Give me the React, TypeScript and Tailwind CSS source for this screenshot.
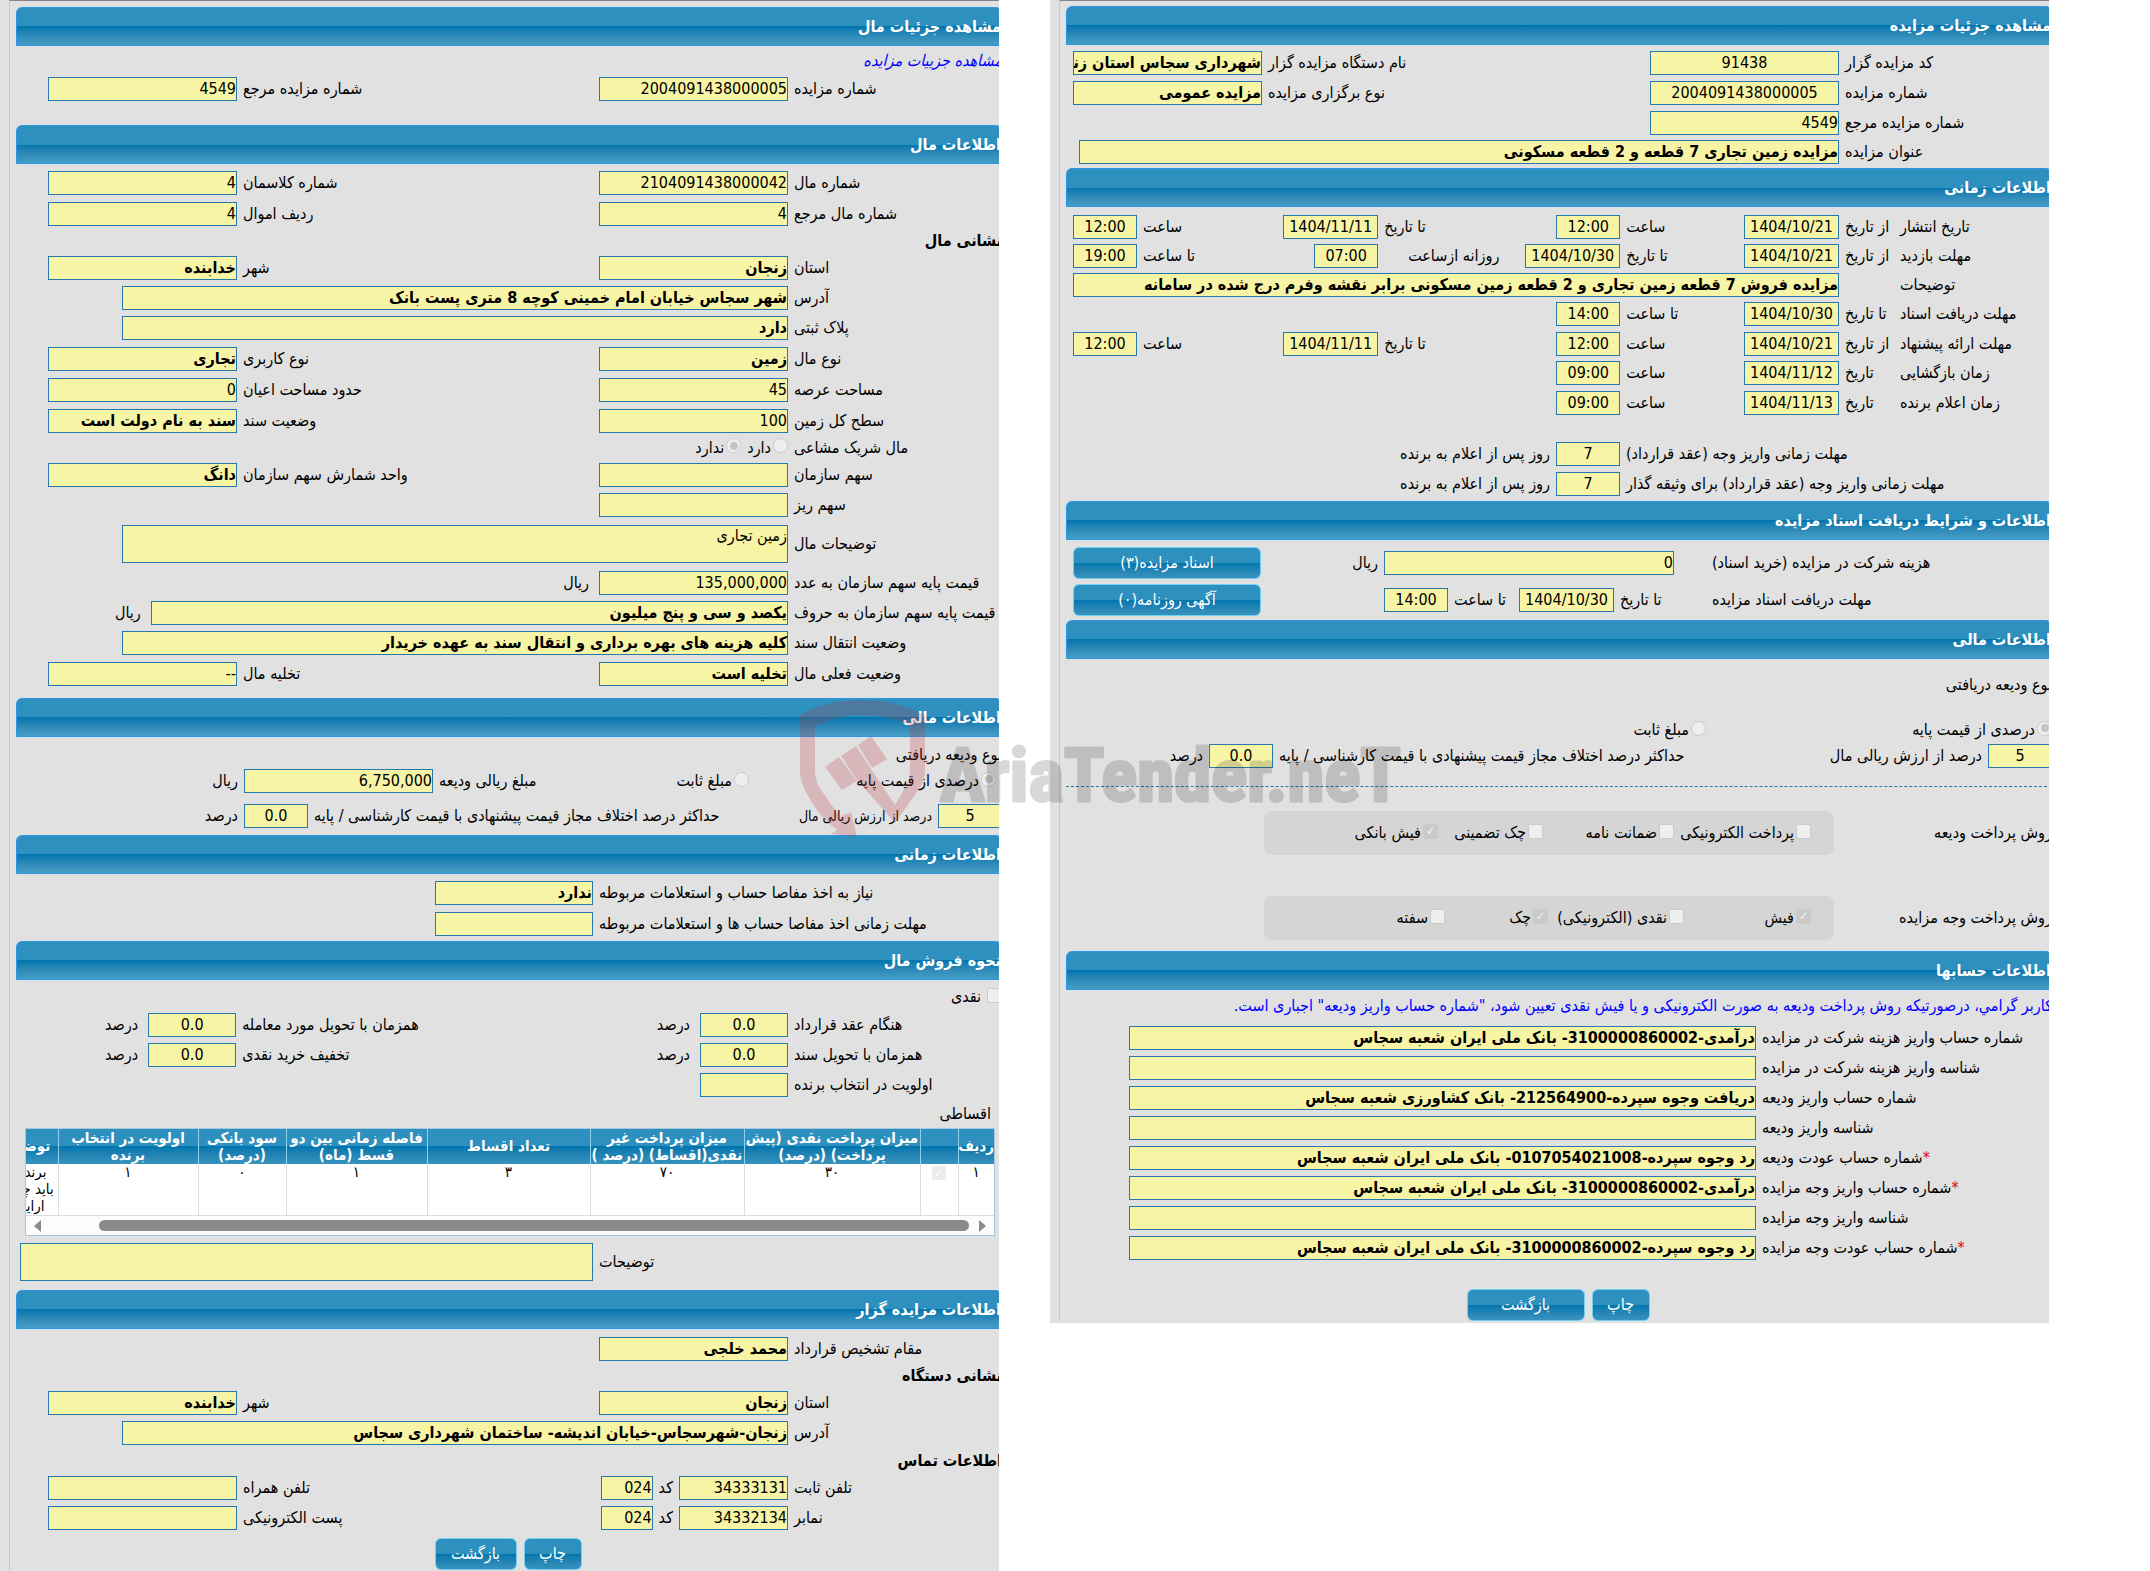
import { useId, type ReactNode } from "react";
import clsx from "clsx";

interface FieldProps {
    label: ReactNode;
    value?: string;
    labelClass?: string;
    inputClass?: string;
    required?: boolean;
}

interface ChoiceProps {
    label: string;
    type: "radio" | "checkbox";
    checked?: boolean;
    className?: string;
}

const WIDE = "w-[189px]";
const DATE = "w-[95px] text-center";
const TIME = "w-16 text-center";
const PERCENT = "w-[88px] text-center";

// Persian values are set in bold, plain numbers are not
const hasLetters = (value: string) => /[آ-ی]/.test(value);

function Field({ label, value = "", labelClass, inputClass, required }: FieldProps) {
    const id = useId();
    return (
        <>
            <label htmlFor={id} className={clsx("shrink-0 whitespace-nowrap text-end", labelClass)}>
                {required && <span className="text-red-600">*</span>}
                {label}
            </label>
            <input
                id={id}
                type="text"
                readOnly
                value={value}
                className={clsx(
                    "h-6 min-w-0 border border-[#2679ab] bg-[#f7f4a5] text-black outline-none",
                    hasLetters(value) && "font-bold",
                    inputClass
                )}
            />
        </>
    );
}

function Area({ label, value = "", labelClass, inputClass }: FieldProps) {
    const id = useId();
    return (
        <>
            <label htmlFor={id} className={clsx("shrink-0 whitespace-nowrap text-end", labelClass)}>
                {label}
            </label>
            <textarea
                id={id}
                readOnly
                value={value}
                className={clsx(
                    "h-[38px] min-w-0 resize-none overflow-hidden border border-[#2679ab] bg-[#f7f4a5] leading-5 text-black outline-none",
                    inputClass
                )}
            />
        </>
    );
}

function Choice({ label, type, checked = false, className }: ChoiceProps) {
    return (
        <label className={clsx("flex items-center gap-0.5 whitespace-nowrap", className)}>
            <input
                type={type}
                disabled
                checked={checked}
                readOnly
                className={clsx(
                    "mb-1 flex size-[15px] shrink-0 appearance-none items-center justify-center border border-[#cbcbcb] bg-[#efefef]",
                    type === "radio"
                        ? "rounded-full checked:before:size-2 checked:before:rounded-full checked:before:bg-[#c4c4c4]"
                        : "rounded-xs checked:bg-[#cacaca] checked:before:text-xs checked:before:text-[#f4f4f4] checked:before:content-['✓']"
                )}
            />
            {label}
        </label>
    );
}

function Header({ children }: { children: ReactNode }) {
    return (
        <h2 className="flex h-[39px] items-center rounded-t-md border border-[#2b95e6] bg-linear-to-b from-[#2e90be] from-50% via-[#0076ad] via-50% to-[#489ec4] font-bold text-white">
            {children}
        </h2>
    );
}

function Row({ children, className }: { children: ReactNode; className?: string }) {
    return <div className={clsx("flex items-center gap-1.5", className)}>{children}</div>;
}

function Button({ children, className }: { children: ReactNode; className?: string }) {
    return (
        <button
            type="button"
            className={clsx(
                "h-8 rounded-md border border-[#6fd0f3] bg-linear-to-b from-[#2e90be] from-50% via-[#0076ad] via-50% to-[#3793bd] text-white",
                className
            )}
        >
            {children}
        </button>
    );
}

function Panel({ children, className }: { children: ReactNode; className?: string }) {
    return (
        <main dir="rtl" className={clsx("min-w-0 flex-1 overflow-hidden bg-[#e1e1e1] pl-[9px]", className)}>
            <div className="-mr-[3px] border-l border-t border-l-[#c8c8c8] border-t-[#858285] pl-1.5">
                {children}
            </div>
        </main>
    );
}

const columns = [
    { title: "ردیف", value: "۱", width: "w-9" },
    { title: "", value: "", width: "w-[38px]" },
    { title: "میزان پرداخت نقدی (پیش پرداخت) (درصد)", value: "۳۰", width: "w-44" },
    { title: "میزان پرداخت غیر نقدی(اقساط) (درصد )", value: "۷۰", width: "w-[154px]" },
    { title: "تعداد اقساط", value: "۳", width: "w-[163px]" },
    { title: "فاصله زمانی بین دو قسط (ماه)", value: "۱", width: "w-[141px]" },
    { title: "سود بانکی (درصد)", value: "۰", width: "w-[88px]" },
    { title: "اولویت در انتخاب برنده", value: "۱", width: "w-[140px]" },
    { title: "توضیحات", value: "برنده\nباید چک\nارایه", width: "w-[76px]" },
];

function Installments() {
    return (
        <div className="mr-[7px] ml-[9px] border border-[#a5c8dc] bg-white">
            <div className="overflow-hidden">
                <table className="w-[1012px] table-fixed border-collapse text-[15px] leading-[17px]">
                    <thead>
                        <tr className="h-[35px] bg-linear-to-b from-[#2e90be] from-50% via-[#0076ad] via-50% to-[#3793bd] text-white">
                            {columns.map((column, index) => (
                                <th key={index} className={clsx("border-l border-[#8fd2ef] p-0 font-bold", column.width)}>
                                    {column.title}
                                </th>
                            ))}
                        </tr>
                    </thead>
                    <tbody>
                        <tr className="h-[51px] text-center align-top">
                            {columns.map((column, index) => (
                                <td
                                    key={index}
                                    className={clsx(
                                        "whitespace-pre-line border-b border-l border-[#dcdcdc] p-0",
                                        index === columns.length - 1 && "pl-6"
                                    )}
                                >
                                    {index === 1 ? (
                                        <input
                                            type="checkbox"
                                            aria-label="انتخاب"
                                            disabled
                                            checked
                                            readOnly
                                            className="inline-flex size-[14px] appearance-none items-center justify-center rounded-xs bg-[#ececec] checked:before:text-xs checked:before:text-white checked:before:content-['✓']"
                                        />
                                    ) : (
                                        column.value
                                    )}
                                </td>
                            ))}
                        </tr>
                    </tbody>
                </table>
            </div>
            <div className="flex h-[19px] items-center gap-2.5 bg-[#fcfcfc] px-2">
                <svg viewBox="0 0 7 12" className="h-3 w-[7px]" fill="#8a8a8a">
                    <path d="M0 0L7 6L0 12Z" />
                </svg>
                <div className="ml-12 h-[11px] flex-1 rounded-full bg-[#8a8a8a]" />
                <svg viewBox="0 0 7 12" className="h-3 w-[7px]" fill="#8a8a8a">
                    <path d="M7 0L0 6L7 12Z" />
                </svg>
            </div>
        </div>
    );
}

function Watermark() {
    return (
        <svg
            viewBox="0 0 610 145"
            className="pointer-events-none absolute top-[697px] left-[797px] h-[145px] w-[610px]"
        >
            <g fill="#b83238" opacity="0.23">
                <path d="M3 18Q30 3 65 3Q98 3 128 18V73Q128 84 122 92L98 126L60 83L44 59L59 49L74 72L98 108L111 86Q113 80 113 73V28Q90 18 65 18Q38 18 18 30V73Q18 82 22 90L43 120L54 115L60 140L34 137L40 133Q20 118 9 95Q3 84 3 73Z" />
                <path d="M28 70L42 60L60 84L45 93Z" />
                <path d="M61 48L74 39L90 62L75 71Z" />
            </g>
            <g opacity="0.15" stroke="#000000" strokeWidth="3" strokeLinejoin="round">
                <text
                    x="143"
                    y="104"
                    className="font-['Roboto_Condensed','Noto_Sans_Condensed','Open_Sans_Condensed','Liberation_Sans_Narrow','Roboto',sans-serif] text-[75px] font-bold"
                >
                    AriaTender.neT
                </text>
            </g>
        </svg>
    );
}

function PropertyPanel() {
    const half = { labelClass: "w-[208px]", inputClass: WIDE };
    const other = { labelClass: "flex-1", inputClass: WIDE };
    return (
        <Panel className="pb-1">
            <div className="pt-1.5">
                <Header>مشاهده جزئیات مال</Header>
                <div className="flex h-[27px] items-end">
                    <a href="#auction" className="text-[#0000ff] italic">مشاهده جزییات مزایده</a>
                </div>
                <Row className="h-[31px] pl-8">
                    <Field label="شماره مزایده" value="2004091438000005" {...half} />
                    <Field label="شماره مزایده مرجع" value="4549" {...other} />
                </Row>
            </div>

            <div className="pt-[21px]">
                <Header>اطلاعات مال</Header>
                <Row className="mt-[3px] h-[31px] pl-8">
                    <Field label="شماره مال" value="2104091438000042" {...half} />
                    <Field label="شماره کلاسمان" value="4" {...other} />
                </Row>
                <Row className="h-[31px] pl-8">
                    <Field label="شماره مال مرجع" value="4" {...half} />
                    <Field label="ردیف اموال" value="4" {...other} />
                </Row>
                <h3 className="flex h-[23px] items-center font-bold">نشانی مال</h3>
                <Row className="h-[31px] pl-8">
                    <Field label="استان" value="زنجان" {...half} />
                    <Field label="شهر" value="خدابنده" {...other} />
                </Row>
                <Row className="h-[30px] pl-[106px]">
                    <Field label="آدرس" value="شهر سجاس خیابان امام خمینی کوچه 8 متری پست بانک" labelClass="w-[208px]" inputClass="flex-1" />
                </Row>
                <Row className="h-[30px] pl-[106px]">
                    <Field label="پلاک ثبتی" value="دارد" labelClass="w-[208px]" inputClass="flex-1" />
                </Row>
                <Row className="h-[31px] pl-8">
                    <Field label="نوع مال" value="زمین" {...half} />
                    <Field label="نوع کاربری" value="تجاری" {...other} />
                </Row>
                <Row className="h-[31px] pl-8">
                    <Field label="مساحت عرصه" value="45" {...half} />
                    <Field label="حدود مساحت اعیان" value="0" {...other} />
                </Row>
                <Row className="h-[31px] pl-8">
                    <Field label="سطح کل زمین" value="100" {...half} />
                    <Field label="وضعیت سند" value="سند به نام دولت است" {...other} />
                </Row>
                <Row className="h-[23px]">
                    <span className="w-[208px] text-end">مال شریک مشاعی</span>
                    <Choice type="radio" label="دارد" />
                    <Choice type="radio" label="ندارد" checked />
                </Row>
                <Row className="h-[31px] pl-8">
                    <Field label="سهم سازمان" {...half} />
                    <Field label="واحد شمارش سهم سازمان" value="دانگ" {...other} />
                </Row>
                <Row className="h-[30px]">
                    <Field label="سهم ریز" {...half} />
                </Row>
                <Row className="h-[47px] pl-[106px]">
                    <Area label="توضیحات مال" value="زمین تجاری" labelClass="w-[208px]" inputClass="flex-1" />
                </Row>
                <Row className="h-[31px]">
                    <Field label="قیمت پایه سهم سازمان به عدد" value="135,000,000" {...half} />
                    <span className="mr-1">ریال</span>
                </Row>
                <Row className="h-[30px] pl-[99px]">
                    <Field label="قیمت پایه سهم سازمان به حروف" value="یکصد و سی و پنج میلیون" labelClass="w-[208px]" inputClass="flex-1" />
                    <span className="mr-1">ریال</span>
                </Row>
                <Row className="h-[30px] pl-[106px]">
                    <Field label="وضعیت انتقال سند" value="کلیه هزینه های بهره برداری و انتقال سند به عهده خریدار" labelClass="w-[208px]" inputClass="flex-1" />
                </Row>
                <Row className="h-[31px] pl-8">
                    <Field label="وضعیت فعلی مال" value="تخلیه است" {...half} />
                    <Field label="تخلیه مال" value="--" {...other} />
                </Row>
            </div>

            <div className="pt-[9px]">
                <Header>اطلاعات مالی</Header>
                <div className="flex h-8 items-center pt-1">نوع ودیعه دریافتی</div>
                <Row className="h-6 pl-48">
                    <Choice type="radio" label="درصدی از قیمت پایه" checked className="mr-1.5 w-[241px]" />
                    <Choice type="radio" label="مبلغ ثابت" />
                    <Field label="مبلغ ریالی ودیعه" value="6,750,000" labelClass="flex-1" inputClass={WIDE} />
                    <span className="w-[30px]">ریال</span>
                </Row>
                <Row className="mt-1 h-[38px] pl-[186px]">
                    <Field label="" value="5" labelClass="hidden" inputClass="w-16 text-center" />
                    <span className="text-sm whitespace-nowrap">درصد از ارزش ریالی مال</span>
                    <Field label="حداکثر درصد اختلاف مجاز قیمت پیشنهادی با قیمت کارشناسی / پایه" value="0.0" labelClass="flex-1" inputClass={TIME} />
                    <span className="w-9">درصد</span>
                </Row>
            </div>

            <div>
                <Header>اطلاعات زمانی</Header>
                <Row className="mt-[3px] h-[31px]">
                    <Field label="نیاز به اخذ مفاصا حساب و استعلامات مربوطه" value="ندارد" labelClass="w-[403px]" inputClass="w-[158px]" />
                </Row>
                <Row className="h-[31px]">
                    <Field label="مهلت زمانی اخذ مفاصا حساب ها و استعلامات مربوطه" labelClass="w-[403px]" inputClass="w-[158px]" />
                </Row>
            </div>

            <div className="pt-0.5">
                <Header>نحوه فروش مال</Header>
                <Choice type="checkbox" label="نقدی" className="mt-[5px] h-6 gap-1.5" />
                <Row className="h-[31px] pl-[89px]">
                    <Field label="هنگام عقد قرارداد" value="0.0" labelClass="w-[208px]" inputClass={PERCENT} />
                    <span className="mr-1">درصد</span>
                    <Field label="همزمان با تحویل مورد معامله" value="0.0" labelClass="flex-1" inputClass={PERCENT} />
                    <span className="mr-1">درصد</span>
                </Row>
                <Row className="h-[30px] pl-[89px]">
                    <Field label="همزمان با تحویل سند" value="0.0" labelClass="w-[208px]" inputClass={PERCENT} />
                    <span className="mr-1">درصد</span>
                    <Field label="تخفیف خرید نقدی" value="0.0" labelClass="flex-1" inputClass={PERCENT} />
                    <span className="mr-1">درصد</span>
                </Row>
                <Row className="h-[30px]">
                    <Field label="اولویت در انتخاب برنده" labelClass="w-[208px]" inputClass={PERCENT} />
                </Row>
                <div className="flex h-7 items-center pr-[11px]">اقساطی</div>
                <Installments />
                <Row className="mt-[7px] pl-1">
                    <Area label="توضیحات" labelClass="w-[403px]" inputClass="flex-1" />
                </Row>
            </div>

            <div className="pt-[9px]">
                <Header>اطلاعات مزایده گزار</Header>
                <Row className="mt-1 h-[31px]">
                    <Field label="مقام تشخیص قرارداد" value="محمد خلجی" {...half} />
                </Row>
                <h3 className="flex h-[23px] items-center font-bold">نشانی دستگاه</h3>
                <Row className="h-[31px] pl-8">
                    <Field label="استان" value="زنجان" {...half} />
                    <Field label="شهر" value="خدابنده" {...other} />
                </Row>
                <Row className="h-[30px] pl-[106px]">
                    <Field label="آدرس" value="زنجان-شهرسجاس-خیابان اندیشه- ساختمان شهرداری سجاس" labelClass="w-[208px]" inputClass="flex-1" />
                </Row>
                <h3 className="flex h-[25px] items-center font-bold">اطلاعات تماس</h3>
                <Row className="h-[30px] pl-8">
                    <Field label="تلفن ثابت" value="34333131" labelClass="w-[208px]" inputClass="w-[109px]" />
                    <Field label="کد" value="024" inputClass="w-[52px]" />
                    <Field label="تلفن همراه" {...other} />
                </Row>
                <Row className="h-[30px] pl-8">
                    <Field label="نمابر" value="34332134" labelClass="w-[208px]" inputClass="w-[109px]" />
                    <Field label="کد" value="024" inputClass="w-[52px]" />
                    <Field label="پست الکترونیکی" {...other} />
                </Row>
                <div className="flex justify-center gap-[7px] pt-[5px] pr-0.5">
                    <Button className="w-[58px]">چاپ</Button>
                    <Button className="w-[82px]">بازگشت</Button>
                </div>
            </div>
        </Panel>
    );
}

const SCHEDULE =
    "grid h-[29px] grid-cols-[152px_49px_95px_1fr_96px_1.2fr_95px_1.2fr_64px] items-center gap-x-1.5 pl-[7px]";

const accounts = [
    { label: "شماره حساب واریز هزینه شرکت در مزایده", value: "درآمدی-3100000860002- بانک ملی ایران شعبه سجاس" },
    { label: "شناسه واریز هزینه شرکت در مزایده", value: "" },
    { label: "شماره حساب واریز ودیعه", value: "دریافت وجوه سپرده-212564900- بانک کشاورزی شعبه سجاس" },
    { label: "شناسه واریز ودیعه", value: "" },
    { label: "شماره حساب عودت ودیعه", value: "رد وجوه سپرده-0107054021008- بانک ملی ایران شعبه سجاس", required: true },
    { label: "شماره حساب واریز وجه مزایده", value: "درآمدی-3100000860002- بانک ملی ایران شعبه سجاس", required: true },
    { label: "شناسه واریز وجه مزایده", value: "" },
    { label: "شماره حساب عودت وجه مزایده", value: "رد وجوه سپرده-3100000860002- بانک ملی ایران شعبه سجاس", required: true },
];

function AuctionPanel() {
    const half = { labelClass: "w-[207px]", inputClass: WIDE };
    const other = { labelClass: "flex-1", inputClass: WIDE };
    return (
        <Panel className="pb-0.5">
            <div className="pt-[5px]">
                <Header>مشاهده جزئیات مزایده</Header>
                <Row className="mt-[3px] h-[30px] pl-[7px]">
                    <Field label="کد مزایده گزار" value="91438" labelClass="w-[207px]" inputClass="w-[189px] text-center" />
                    <Field label="نام دستگاه مزایده گزار" value="شهرداری سجاس استان زنجان" {...other} />
                </Row>
                <Row className="h-[30px] pl-[7px]">
                    <Field label="شماره مزایده" value="2004091438000005" labelClass="w-[207px]" inputClass="w-[189px] text-center" />
                    <Field label="نوع برگزاری مزایده" value="مزایده عمومی" {...other} />
                </Row>
                <Row className="h-[29px]">
                    <Field label="شماره مزایده مرجع" value="4549" {...half} />
                </Row>
                <Row className="h-[30px] pl-[13px]">
                    <Field label="عنوان مزایده" value="مزایده زمین تجاری 7 قطعه و 2 قطعه مسکونی" labelClass="w-[207px]" inputClass="flex-1" />
                </Row>
            </div>

            <div className="pt-px">
                <Header>اطلاعات زمانی</Header>
                <div className="pt-[5px]">
                    <div className={SCHEDULE}>
                        <span className="text-end">تاریخ انتشار</span>
                        <Field label="از تاریخ" value="1404/10/21" inputClass={DATE} />
                        <Field label="ساعت" value="12:00" inputClass={TIME} />
                        <Field label="تا تاریخ" value="1404/11/11" inputClass={DATE} />
                        <Field label="ساعت" value="12:00" inputClass={TIME} />
                    </div>
                    <div className={SCHEDULE}>
                        <span className="text-end">مهلت بازدید</span>
                        <Field label="از تاریخ" value="1404/10/21" inputClass={DATE} />
                        <Field label="تا تاریخ" value="1404/10/30" inputClass={DATE} />
                        <Field label="روزانه ازساعت" value="07:00" labelClass="pl-6" inputClass={TIME} />
                        <Field label="تا ساعت" value="19:00" inputClass={TIME} />
                    </div>
                    <div className={SCHEDULE}>
                        <Field
                            label="توضیحات"
                            value="مزایده فروش 7 قطعه زمین تجاری و 2 قطعه زمین مسکونی برابر نقشه وفرم درج شده در سامانه"
                            inputClass="col-start-3 col-end-10"
                        />
                    </div>
                    <div className={SCHEDULE}>
                        <span className="text-end">مهلت دریافت اسناد</span>
                        <Field label="تا تاریخ" value="1404/10/30" inputClass={DATE} />
                        <Field label="تا ساعت" value="14:00" inputClass={TIME} />
                    </div>
                    <div className={clsx(SCHEDULE, "mt-px")}>
                        <span className="text-end">مهلت ارائه پیشنهاد</span>
                        <Field label="از تاریخ" value="1404/10/21" inputClass={DATE} />
                        <Field label="ساعت" value="12:00" inputClass={TIME} />
                        <Field label="تا تاریخ" value="1404/11/11" inputClass={DATE} />
                        <Field label="ساعت" value="12:00" inputClass={TIME} />
                    </div>
                    <div className={SCHEDULE}>
                        <span className="text-end">زمان بازگشایی</span>
                        <Field label="تاریخ" value="1404/11/12" inputClass={DATE} />
                        <Field label="ساعت" value="09:00" inputClass={TIME} />
                    </div>
                    <div className={clsx(SCHEDULE, "mt-px")}>
                        <span className="text-end">زمان اعلام برنده</span>
                        <Field label="تاریخ" value="1404/11/13" inputClass={DATE} />
                        <Field label="ساعت" value="09:00" inputClass={TIME} />
                    </div>
                </div>
                <Row className="mt-[22px] h-[30px]">
                    <Field label="مهلت زمانی واریز وجه (عقد قرارداد)" value="7" labelClass="w-[426px]" inputClass={TIME} />
                    <span>روز پس از اعلام به برنده</span>
                </Row>
                <Row className="h-[30px]">
                    <Field label="مهلت زمانی واریز وجه (عقد قرارداد) برای وثیقه گذار" value="7" labelClass="w-[426px]" inputClass={TIME} />
                    <span>روز پس از اعلام به برنده</span>
                </Row>
            </div>

            <div className="pt-0.5">
                <Header>اطلاعات و شرایط دریافت اسناد مزایده</Header>
                <Row className="mt-1 h-[37px] pl-[7px]">
                    <Field label="هزینه شرکت در مزایده (خرید اسناد)" value="0" labelClass="w-[340px] ml-8" inputClass="w-[290px]" />
                    <span className="flex-1">ریال</span>
                    <Button className="w-[188px]">اسناد مزایده(۳)</Button>
                </Row>
                <Row className="h-[37px] pl-[7px]">
                    <span className="w-[340px] text-end">مهلت دریافت اسناد مزایده</span>
                    <Field label="تا تاریخ" value="1404/10/30" labelClass="w-[86px]" inputClass={DATE} />
                    <Field label="تا ساعت" value="14:00" labelClass="w-[59px]" inputClass={TIME} />
                    <span className="flex-1" />
                    <Button className="w-[188px]">آگهی روزنامه(۰)</Button>
                </Row>
            </div>

            <div className="pt-0.5">
                <Header>اطلاعات مالی</Header>
                <div className="mt-2.5 flex h-8 items-center">نوع ودیعه دریافتی</div>
                <Row className="mt-4 h-[26px]">
                    <Choice type="radio" label="درصدی از قیمت پایه" checked className="w-[340px]" />
                    <Choice type="radio" label="مبلغ ثابت" />
                </Row>
                <Row className="h-[26px] pl-[101px]">
                    <Field label="" value="5" labelClass="hidden" inputClass="w-16 text-center" />
                    <span className="whitespace-nowrap">درصد از ارزش ریالی مال</span>
                    <Field label="حداکثر درصد اختلاف مجاز قیمت پیشنهادی با قیمت کارشناسی / پایه" value="0.0" labelClass="flex-1" inputClass={TIME} />
                    <span className="w-9">درصد</span>
                </Row>
                <hr className="mt-[17px] border-t border-dashed border-[#2679ab]" />
                <div className="mt-6 flex items-center">
                    <span className="w-[218px]">روش پرداخت ودیعه</span>
                    <div className="grid h-11 w-[570px] grid-cols-[137px_131px_105px_1fr] items-center rounded-lg bg-[#d5d5d5] pr-[23px]">
                        <Choice type="checkbox" label="پرداخت الکترونیکی" />
                        <Choice type="checkbox" label="ضمانت نامه" />
                        <Choice type="checkbox" label="چک تضمینی" />
                        <Choice type="checkbox" label="فیش بانکی" checked />
                    </div>
                </div>
                <div className="mt-[41px] flex items-center">
                    <span className="w-[218px]">روش پرداخت وجه مزایده</span>
                    <div className="grid h-11 w-[570px] grid-cols-[127px_136px_103px_1fr] items-center rounded-lg bg-[#d5d5d5] pr-[23px]">
                        <Choice type="checkbox" label="فیش" checked />
                        <Choice type="checkbox" label="نقدی (الکترونیکی)" />
                        <Choice type="checkbox" label="چک" checked />
                        <Choice type="checkbox" label="سفته" />
                    </div>
                </div>
            </div>

            <div className="pt-[11px]">
                <Header>اطلاعات حسابها</Header>
                <p className="flex h-8 items-center whitespace-nowrap text-[#0000ff]">
                    کاربر گرامي، درصورتیکه روش پرداخت ودیعه به صورت الکترونیکی و یا فیش نقدی تعیین شود، "شماره حساب واریز ودیعه" اجباری است.
                </p>
                <div className="grid gap-1.5 pt-1">
                    {accounts.map((account, index) => (
                        <Row key={index} className="pl-[63px]">
                            <Field {...account} labelClass="w-[290px]" inputClass="flex-1" />
                        </Row>
                    ))}
                </div>
                <div className="flex justify-center gap-[7px] pt-[29px] pr-0.5">
                    <Button className="w-[58px]">چاپ</Button>
                    <Button className="w-[118px]">بازگشت</Button>
                </div>
            </div>
        </Panel>
    );
}

export default function App() {
    return (
        <div className="relative flex items-start gap-[51px] bg-white pr-[101px] font-['DejaVu_Sans_Condensed','DejaVu_Sans',sans-serif] text-base text-black">
            <PropertyPanel />
            <AuctionPanel />
            <Watermark />
        </div>
    );
}
